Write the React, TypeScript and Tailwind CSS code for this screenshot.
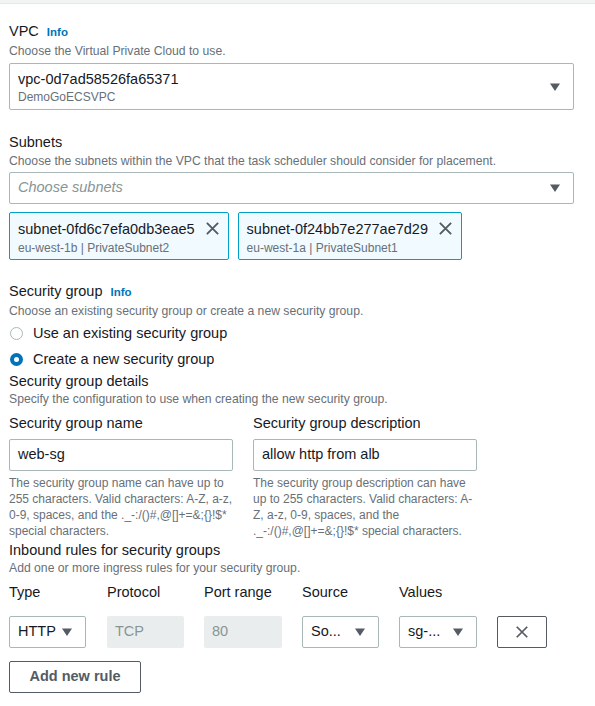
import React from "react";

const Caret = ({ className = "" }: { className?: string }) => (
  <svg width="12" height="10" viewBox="0 0 12 10" className={className}>
    <path d="M1 1.5h10L6 9z" fill="#545b64" />
  </svg>
);

const Cross = ({ size = 16 }: { size?: number }) => (
  <svg width={size} height={size} viewBox="0 0 16 16">
    <path d="M2 2l12 12M14 2L2 14" stroke="#545b64" strokeWidth="2" fill="none" />
  </svg>
);

function Info() {
  return <span className="ml-2 text-[11.5px] font-bold text-[#0073bb]">Info</span>;
}

function Token({ id, meta }: { id: string; meta: string }) {
  return (
    <div className="flex h-[48px] items-start gap-[10px] rounded-[2px] border border-[#00a1c9] bg-[#f1faff] px-2 pt-[5px]">
      <div className="flex flex-col">
        <span className="text-[14.5px] leading-[22px] text-[#16191f]">{id}</span>
        <span className="text-[12px] leading-[16px] text-[#687078]">{meta}</span>
      </div>
      <div className="mt-[3px]">
        <Cross size={15} />
      </div>
    </div>
  );
}

function SmallSelect({ value, w }: { value: string; w: string }) {
  return (
    <div
      className={`flex h-[32px] ${w} items-center justify-between rounded-[2px] border border-[#aab7b8] pl-2 pr-3 text-[14.5px] text-[#16191f]`}
    >
      <span>{value}</span>
      <Caret />
    </div>
  );
}

const nameHelp =
  "The security group name can have up to 255 characters. Valid characters: A-Z, a-z, 0-9, spaces, and the ._-:/()#,@[]+=&;{}!$* special characters.";
const descHelp =
  "The security group description can have up to 255 characters. Valid characters: A-Z, a-z, 0-9, spaces, and the ._-:/()#,@[]+=&;{}!$* special characters.";

export default function App() {
  return (
    <div
      className="min-h-screen bg-white text-[#16191f]"
      style={{ fontFamily: '"Liberation Sans", Arial, sans-serif' }}
    >
      <div className="h-[4px] border-b border-[#e5e7e8] bg-[#f2f3f3]" />
      <div className="px-[9px] pt-[17px]">
        {/* VPC */}
        <div className="flex items-baseline text-[14.5px] leading-[20px]">
          VPC <Info />
        </div>
        <div className="text-[12.2px] leading-[18px] text-[#687078]">
          Choose the Virtual Private Cloud to use.
        </div>
        <div className="mt-[3px] flex h-[47px] w-[565px] items-center justify-between rounded-[2px] border border-[#aab7b8] pl-2 pr-3">
          <div className="flex flex-col">
            <span className="text-[14.5px] leading-[20px]">vpc-0d7ad58526fa65371</span>
            <span className="text-[12px] leading-[16px] text-[#687078]">DemoGoECSVPC</span>
          </div>
          <Caret />
        </div>

        {/* Subnets */}
        <div className="mt-[22px] text-[14.5px] leading-[20px]">Subnets</div>
        <div className="text-[12.2px] leading-[18px] text-[#687078]">
          Choose the subnets within the VPC that the task scheduler should consider for placement.
        </div>
        <div className="mt-[2px] flex h-[32px] w-[565px] items-center justify-between rounded-[2px] border border-[#aab7b8] pl-2 pr-3">
          <span className="text-[14.5px] italic text-[#879596]">Choose subnets</span>
          <Caret />
        </div>
        <div className="mt-[8px] flex gap-[9px]">
          <Token id="subnet-0fd6c7efa0db3eae5" meta="eu-west-1b | PrivateSubnet2" />
          <Token id="subnet-0f24bb7e277ae7d29" meta="eu-west-1a | PrivateSubnet1" />
        </div>

        {/* Security group */}
        <div className="mt-[21px] flex items-baseline text-[14.5px] leading-[20px]">
          Security group <Info />
        </div>
        <div className="text-[12.2px] leading-[18px] text-[#687078]">
          Choose an existing security group or create a new security group.
        </div>
        <div className="mt-[3px] flex items-center gap-[10px] text-[14.5px] leading-[20px]">
          <span className="ml-[1px] h-[13px] w-[13px] rounded-full border border-[#aab7b8]" />
          Use an existing security group
        </div>
        <div className="mt-[6px] flex items-center gap-[10px] text-[14.5px] leading-[20px]">
          <span className="ml-[1px] flex h-[13px] w-[13px] items-center justify-center rounded-full bg-[#0073bb]">
            <span className="h-[5px] w-[5px] rounded-full bg-white" />
          </span>
          Create a new security group
        </div>
        <div className="mt-[2px] text-[14.5px] leading-[20px]">Security group details</div>
        <div className="text-[12.2px] leading-[16px] text-[#687078]">
          Specify the configuration to use when creating the new security group.
        </div>

        <div className="mt-[6px] flex gap-[20px]">
          <div className="w-[224px]">
            <div className="text-[14.5px] leading-[20px]">Security group name</div>
            <div className="mt-[6px] flex h-[32px] items-center rounded-[2px] border border-[#aab7b8] px-2 text-[14.5px]">
              web-sg
            </div>
            <div className="mt-[4px] text-[12px] leading-[16px] text-[#687078]">{nameHelp}</div>
          </div>
          <div className="w-[224px]">
            <div className="text-[14.5px] leading-[20px]">Security group description</div>
            <div className="mt-[6px] flex h-[32px] items-center rounded-[2px] border border-[#aab7b8] px-2 text-[14.5px]">
              allow http from alb
            </div>
            <div className="mt-[4px] text-[12px] leading-[16px] text-[#687078]">{descHelp}</div>
          </div>
        </div>

        {/* Inbound rules */}
        <div className="mt-[1px] text-[14.5px] leading-[20px]">Inbound rules for security groups</div>
        <div className="text-[12.2px] leading-[16px] text-[#687078]">
          Add one or more ingress rules for your security group.
        </div>
        <div className="mt-[6px] grid grid-cols-[98px_97px_98px_97px_98px_auto] text-[14.5px] leading-[20px]">
          <span>Type</span>
          <span>Protocol</span>
          <span>Port range</span>
          <span>Source</span>
          <span>Values</span>
          <span />
        </div>
        <div className="mt-[14px] grid grid-cols-[98px_97px_98px_97px_98px_auto] items-center">
          <SmallSelect value="HTTP" w="w-[77px]" />
          <div className="flex h-[32px] w-[77px] items-center rounded-[2px] bg-[#eaeded] px-2 text-[14.5px] text-[#879596]">
            TCP
          </div>
          <div className="flex h-[32px] w-[78px] items-center rounded-[2px] bg-[#eaeded] px-2 text-[14.5px] text-[#879596]">
            80
          </div>
          <SmallSelect value="So..." w="w-[77px]" />
          <SmallSelect value="sg-..." w="w-[78px]" />
          <div className="flex h-[32px] w-[50px] items-center justify-center rounded-[2px] border border-[#545b64]">
            <Cross size={14} />
          </div>
        </div>
        <div className="mt-[13px] flex h-[32px] w-[132px] items-center justify-center rounded-[2px] border border-[#545b64] text-[14.5px] font-bold text-[#545b64]">
          Add new rule
        </div>
      </div>
    </div>
  );
}
